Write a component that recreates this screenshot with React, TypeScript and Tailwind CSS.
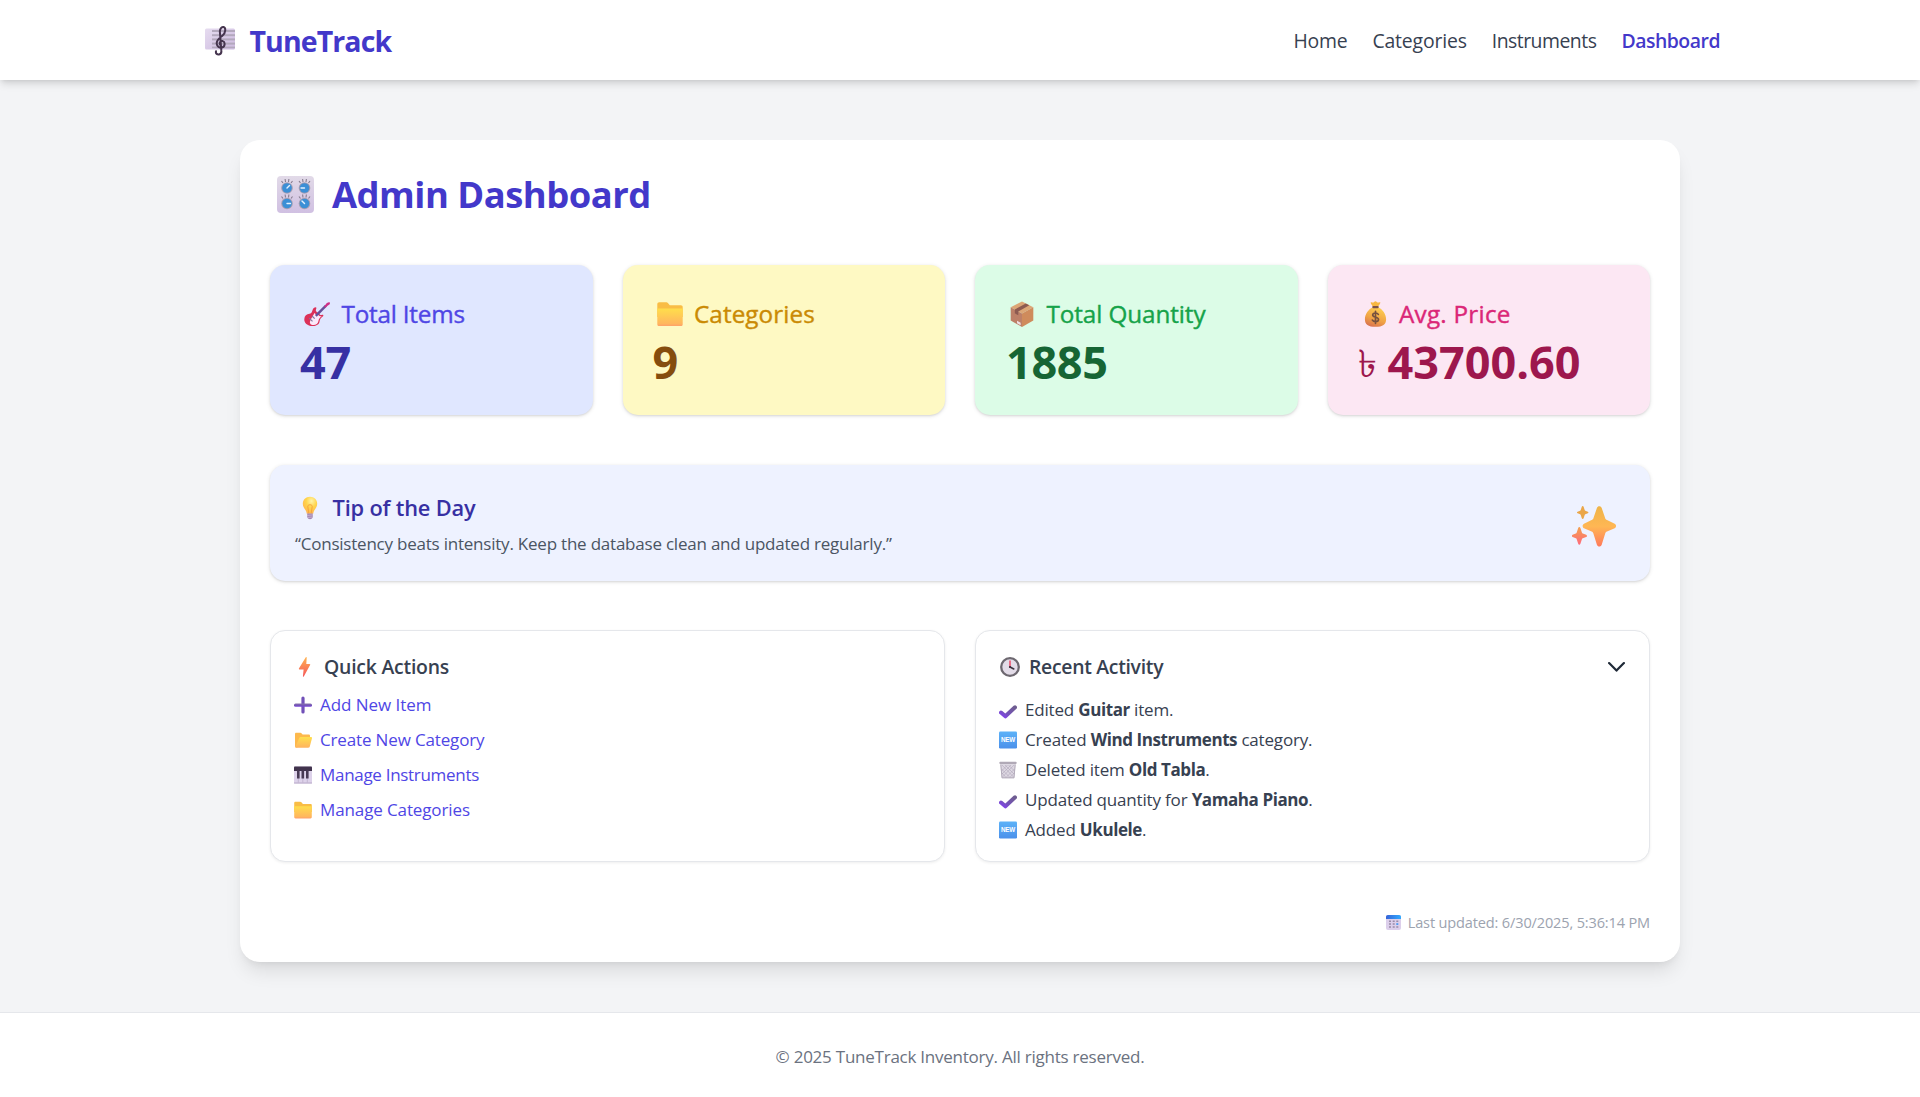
import type { ReactNode } from 'react';

type IconProps = { className?: string };

function ScoreIcon({ className }: IconProps) {
  return (
    <svg viewBox="0 0 30 30" className={className} aria-hidden="true">
      <defs>
        <linearGradient id="score" x1="0" y1="0" x2="1" y2="1">
          <stop offset="0" stopColor="#e6dcf0" />
          <stop offset="1" stopColor="#cdbadf" />
        </linearGradient>
      </defs>
      <rect x="0" y="2.5" width="30" height="21" rx="1.5" fill="url(#score)" />
      <g fill="#b3a8bd">
        <rect x="7" y="4" width="23" height="2" />
        <rect x="7" y="8.2" width="23" height="2" />
        <rect x="7" y="12.4" width="23" height="2" />
        <rect x="7" y="16.6" width="23" height="2" />
        <rect x="7" y="20.6" width="23" height="1.6" />
      </g>
      <path
        d="M11 25.2c-.6 2.6 1.400 3.500 3 3.200 2.200-.4 2.600-2.200 2.300-4.200L14.900 6.200c-.3-3.200 1.500-5.400 3.600-5.200 2.600.6 2.200 5.600-.7 8.200-3.200 2.900-6.300 4.600-6.100 8.300.2 3.200 2.900 4.400 5.300 3.900 3.200-.7 3.500-5.500.7-6.300-2.500-.5-3.600 1.900-2.600 3.500"
        fill="none"
        stroke="#45344e"
        strokeWidth="2"
        strokeLinecap="round"
      />
    </svg>
  );
}

function Knob({ x, y, dx, dy }: { x: number; y: number; dx: number; dy: number }) {
  return (
    <g>
      <path
        d={`M${x - 4} ${y - 5}l-1.500-2M${x - 1.500} ${y - 6}l-.4-3M${x + 1.500} ${y - 6}l.4-3M${x + 4} ${y - 5}l1.500-2`}
        stroke="#857c8e"
        strokeWidth="1.100"
      />
      <circle cx={x} cy={y} r="5.800" fill="#a79fb3" />
      <circle cx={x} cy={y} r="4.800" fill="#3b8fd6" />
      <path d={`M${x} ${y}l${dx} ${dy}`} stroke="#e4f2ff" strokeWidth="1.400" strokeLinecap="round" />
    </g>
  );
}

function KnobsIcon({ className }: IconProps) {
  return (
    <svg viewBox="0 0 37 37" className={className} aria-hidden="true">
      <defs>
        <linearGradient id="knobs" x1="0" y1="0" x2="0" y2="1">
          <stop offset="0" stopColor="#e2dae8" />
          <stop offset="1" stopColor="#d0c0e2" />
        </linearGradient>
      </defs>
      <rect width="37" height="37" rx="4" fill="url(#knobs)" />
      <Knob x={10} y={12} dx={2.5} dy={-2.5} />
      <Knob x={27.5} y={12} dx={-3.5} dy={0} />
      <Knob x={10} y={27.5} dx={3.5} dy={0} />
      <Knob x={27.5} y={27.5} dx={-2.5} dy={-2.5} />
    </svg>
  );
}

function GuitarIcon({ className }: IconProps) {
  return (
    <svg viewBox="0 0 26 26" className={className} aria-hidden="true">
      <path
        d="M9.500 7.200c2-1.700 3.700-.9 2.600.8-.9 1.700.2 3.100 2.300 3.900 1.300 1.100 1.900 2.600 3.600 1.900 1.900-.7 1.700 1.100.4 2-1.700 1.200-2.500 2.600-2.800 4.500-.5 3.500-3.300 4.800-7.100 4.700C3.400 24.800 0 22 .3 17.900.5 14.500 2.600 13 5.500 12.700c2.900-.3 2.400-3.500 4-5.500z"
        fill="#dc3159"
      />
      <path
        d="M10.500 12c1 1.600 3.300 1.200 4.600 2.700 1.100.9 2.100.5 2.600.6-2 1.400-3 2.800-3.300 5-.4 2.700-3 4.100-5.900 3.600-2.600-.5-3.300-2.400-2.100-4.500 1.200-2.500 2.600-4.500 4.100-7.400z"
        fill="#fbe9fa"
      />
      <path d="M11.800 14.800L22 4.600" stroke="#66509a" strokeWidth="2.500" />
      <path d="M20.200 5.400l2.600-3.500 2.700-.8.500 2-2.400 1.700-2.500 1.900z" fill="#cf2f86" />
      <path d="M5.300 17.200l3.200 3.200M8 15l2.700 2.700" stroke="#8377a0" strokeWidth="1.200" />
    </svg>
  );
}

function FolderIcon({ className }: IconProps) {
  return (
    <svg viewBox="0 0 26 26" className={className} aria-hidden="true">
      <defs>
        <linearGradient id="folder" x1="0" y1="0" x2="0" y2="1">
          <stop offset="0" stopColor="#ffde4b" />
          <stop offset=".85" stopColor="#ffb75e" />
          <stop offset="1" stopColor="#ffa069" />
        </linearGradient>
      </defs>
      <path d="M.3 3.200c0-1.300.7-2 2-2h6.500c1 0 1.700.3 2.300 1.100l1.700 2h11c1.300 0 1.900.7 1.900 1.900V16H.3z" fill="#f9bd45" />
      <path d="M.3 7.500h25.400v15.700c0 1.200-.7 1.900-1.900 1.900H2.200c-1.200 0-1.900-.7-1.900-1.900z" fill="url(#folder)" />
    </svg>
  );
}

function OpenFolderIcon({ className }: IconProps) {
  return (
    <svg viewBox="0 0 18 18" className={className} aria-hidden="true">
      <defs>
        <linearGradient id="open-folder" x1="0" y1="0" x2="0" y2="1">
          <stop offset="0" stopColor="#ffe04c" />
          <stop offset="1" stopColor="#ffb35f" />
        </linearGradient>
      </defs>
      <path d="M1 2.900C1 2.200 1.500 1.800 2.200 1.800h4.100c.6 0 1 .2 1.400.6l.9 1h6c.9 0 1.400.5 1.400 1.300V13L2.500 16.500C1.500 16.500 1 16 1 15z" fill="#fdb94c" />
      <path d="M6.600 6h10.500c.8 0 1.100.5.9 1.200l-2.200 8.300c-.2.800-.7 1.200-1.500 1.200H2.300c-.8 0-1.200-.5-.8-1.300L5.300 6.900c.3-.6.700-.9 1.300-.9z" fill="url(#open-folder)" />
    </svg>
  );
}

function PackageIcon({ className }: IconProps) {
  return (
    <svg viewBox="0 0 26 26" className={className} aria-hidden="true">
      <path d="M13 .5l11.300 5.700L13 12.500 1.700 6.200z" fill="#dca676" />
      <path d="M1.700 6.200L13 12.500V26L1.700 19.500z" fill="#bd8068" />
      <path d="M24.300 6.200L13 12.500V26l11.300-6.500z" fill="#cf8b5c" />
      <path d="M16.800 2.400l3.500 1.800L9.300 10.400v3.900l-3.500-2V8.500z" fill="#8d5a50" />
      <path d="M8 19.700l3.600 2v2.600L8 22.300z" fill="#f0dfe5" />
    </svg>
  );
}

function MoneyBagIcon({ className }: IconProps) {
  return (
    <svg viewBox="0 0 26 26" className={className} aria-hidden="true">
      <defs>
        <linearGradient id="bag" x1=".7" y1="0" x2=".3" y2="1">
          <stop offset="0" stopColor="#fdcf52" />
          <stop offset=".6" stopColor="#f0a244" />
          <stop offset="1" stopColor="#d8714f" />
        </linearGradient>
      </defs>
      <path d="M8.700 1.300c1.200-.4 1.800.4 2.700.1.900-.3 1-1.200 2.100-1.200 1 0 1.200.9 2.100 1.200.9.300 1.500-.5 2.700-.1.400 1.400-1.700 2.800-2.100 4.700h-5.400c-.4-1.900-2.500-3.300-2.100-4.700z" fill="#f7b742" />
      <path d="M10.500 6.500h6c4 1.800 7.600 6.600 7.600 11.700 0 5.300-3.300 7.600-10.600 7.600S2.900 23.500 2.900 18.200c0-5.100 3.600-9.900 7.600-11.700z" fill="url(#bag)" />
      <rect x="10.300" y="5" width="6.400" height="2.300" rx="1" fill="#7b5148" />
      <path d="M16.300 13.400c-.6-1-1.600-1.400-2.800-1.400-1.700 0-2.800.8-2.800 2.100 0 3 5.800 1.300 5.800 4.400 0 1.500-1.300 2.200-3 2.200-1.400 0-2.500-.5-3.100-1.600M13.500 10.300v12" fill="none" stroke="#76513f" strokeWidth="1.700" strokeLinecap="round" />
    </svg>
  );
}

function BulbIcon({ className }: IconProps) {
  return (
    <svg viewBox="0 0 24 24" className={className} aria-hidden="true">
      <defs>
        <radialGradient id="bulb" cx=".6" cy=".25" r=".8">
          <stop offset="0" stopColor="#fff3a8" />
          <stop offset=".45" stopColor="#ffd54c" />
          <stop offset="1" stopColor="#ffb04f" />
        </radialGradient>
      </defs>
      <path d="M12 .8c4.300 0 7.200 3 7.200 7 0 4.800-3.600 5.300-4 10H8.800c-.4-4.700-4-5.200-4-10 0-4 2.900-7 7.200-7z" fill="url(#bulb)" />
      <path d="M10.800 17.500l-1-7c-.4-2.300 4.800-2.300 4.400 0l-1 7" fill="none" stroke="#f5a33d" strokeWidth="1" />
      <path d="M9.200 17.500h5.600v3c0 3.700-5.600 3.700-5.600 0z" fill="#a587b3" />
      <path d="M9.200 19.500l5.600-.6M9.400 21.500l5.200-.5" stroke="#d1bfd9" strokeWidth=".7" />
    </svg>
  );
}

function SparklesIcon({ className }: IconProps) {
  return (
    <svg viewBox="0 0 44 41" className={className} aria-hidden="true">
      <defs>
        <linearGradient id="spark" x1=".5" y1="0" x2=".5" y2="1">
          <stop offset="0" stopColor="#eeb448" />
          <stop offset=".5" stopColor="#ffb754" />
          <stop offset="1" stopColor="#ff7a5c" />
        </linearGradient>
        <linearGradient id="spark-low" x1=".5" y1="0" x2=".5" y2="1">
          <stop offset="0" stopColor="#f3a04d" />
          <stop offset="1" stopColor="#ff6b7c" />
        </linearGradient>
      </defs>
      <path d="M24.900 2c.8-2.400 4-2.400 4.800 0l3.500 10.200c.4 1 .8 1.400 1.800 1.800l7.700 3.700c1.800.9 1.800 3.700 0 4.600L35 25.600c-1 .4-1.400.9-1.800 1.900L29.700 38.800c-.8 2.400-4 2.400-4.800 0l-3.500-11.300c-.4-1-.8-1.500-1.800-1.900L12 22.300c-1.800-.9-1.800-3.700 0-4.600l7.600-3.700c1-.4 1.400-.8 1.800-1.800z" fill="url(#spark)" />
      <path d="M9.800.8c.3-1 1.500-1 1.800 0l1.100 3.300c.2.400.3.500.6.700l2.500.9c.8.300.8 1.300 0 1.600l-2.500.9c-.3.200-.4.300-.6.700l-1.100 3.300c-.3 1-1.500 1-1.800 0L8.700 8.900c-.2-.4-.3-.5-.6-.7l-2.500-.9c-.8-.3-.8-1.300 0-1.600l2.500-.9c.3-.2.400-.3.600-.7z" fill="#eaa648" />
      <path d="M6.200 22c.4-1.200 1.800-1.200 2.200 0l1.500 4.600c.2.600.4.800.9 1l3.400 1.200c1 .4 1 1.800 0 2.200l-3.400 1.200c-.5.200-.7.400-.9 1l-1.500 4.600c-.4 1.200-1.800 1.200-2.200 0l-1.500-4.600c-.2-.6-.4-.8-.9-1L.6 31c-1-.4-1-1.800 0-2.200L3.800 27.600c.5-.2.700-.4.900-1z" fill="url(#spark-low)" />
    </svg>
  );
}

function BoltIcon({ className }: IconProps) {
  return (
    <svg viewBox="0 0 20 20" className={className} aria-hidden="true">
      <defs>
        <linearGradient id="bolt" x1=".5" y1="0" x2=".5" y2="1">
          <stop offset="0" stopColor="#ffb34f" />
          <stop offset="1" stopColor="#f5565b" />
        </linearGradient>
      </defs>
      <path d="M10.800.3c.3-.5.900-.3.900.300L11.300 7h3.200c.7 0 .9.500.6 1L8.800 19.500c-.4.600-1 .4-.9-.3l.7-6.800H4.500c-.6 0-.8-.4-.6-.9z" fill="url(#bolt)" />
    </svg>
  );
}

function PlusIcon({ className }: IconProps) {
  return (
    <svg viewBox="0 0 18 18" className={className} aria-hidden="true">
      <defs>
        <linearGradient id="plus" x1="0" y1="0" x2="0" y2="1">
          <stop offset="0" stopColor="#8a76ad" />
          <stop offset=".55" stopColor="#7354b5" />
          <stop offset="1" stopColor="#7a45dd" />
        </linearGradient>
      </defs>
      <path d="M9 2v14" stroke="#7150b8" strokeWidth="3.200" strokeLinecap="round" />
      <rect y="7.400" width="18" height="3.400" rx="1.500" fill="url(#plus)" />
    </svg>
  );
}

function PianoIcon({ className }: IconProps) {
  return (
    <svg viewBox="0 0 18 18" className={className} aria-hidden="true">
      <rect y=".5" width="18" height="17" rx=".8" fill="#ddd2ea" />
      <path d="M0 16.500h18v1H0z" fill="#b9abc8" />
      <path d="M4.300 12v4.500M8.800 12v4.500M13.300 12v4.500" stroke="#b8aac6" strokeWidth=".7" />
      <path d="M0 1.300C0 .8.300.5.800.5h16.400c.5 0 .8.300.8.800V5H0z" fill="#41334d" />
      <path d="M3 4.500h2.600v8H3zM7.500 4.500h2.600v8H7.500zM12 4.500h2.600v8H12z" fill="#483a54" />
    </svg>
  );
}

function ClockIcon({ className }: IconProps) {
  return (
    <svg viewBox="0 0 20 20" className={className} aria-hidden="true">
      <circle cx="10" cy="10" r="8.800" fill="#e3dce8" stroke="#6d6870" strokeWidth="2.300" />
      <path d="M10 10V4" stroke="#ee4a67" strokeWidth="1.500" strokeLinecap="round" />
      <path d="M10 10l3.800 2" stroke="#3c3340" strokeWidth="1.600" strokeLinecap="round" />
      <circle cx="10" cy="10" r="1.100" fill="#3c3340" />
    </svg>
  );
}

function CheckIcon({ className }: IconProps) {
  return (
    <svg viewBox="0 0 18 18" className={className} aria-hidden="true">
      <defs>
        <linearGradient id="check" x1="1" y1="0" x2="0" y2="1">
          <stop offset="0" stopColor="#6f5d90" />
          <stop offset=".6" stopColor="#7452b8" />
          <stop offset="1" stopColor="#8145ea" />
        </linearGradient>
      </defs>
      <path d="M2 11.500l4.400 3.800L16 6.300" fill="none" stroke="url(#check)" strokeWidth="4" strokeLinecap="round" strokeLinejoin="round" />
    </svg>
  );
}

function NewIcon({ className }: IconProps) {
  return (
    <svg viewBox="0 0 18 18" className={className} aria-hidden="true">
      <defs>
        <linearGradient id="new" x1="0" y1="0" x2="0" y2="1">
          <stop offset="0" stopColor="#5cb2f8" />
          <stop offset="1" stopColor="#4b90ea" />
        </linearGradient>
      </defs>
      <rect y=".5" width="18" height="17" rx="1.300" fill="url(#new)" />
      <text x="9" y="11.300" textAnchor="middle" fontFamily="Liberation Sans" fontWeight="700" fontSize="6.300" fill="#fff">
        NEW
      </text>
    </svg>
  );
}

function BinIcon({ className }: IconProps) {
  return (
    <svg viewBox="0 0 18 18" className={className} aria-hidden="true">
      <path d="M1.300 2.500h15.400L15.300 17.300H2.700z" fill="#ddd8e2" />
      <path
        d="M3 4l11.500 12M6 4l9 9M9.500 4l6 6M2.500 8l8.500 8.500M3 12l4 4.500M15 4L3.500 16M12 4l-9 9M8.500 4l-6 6M15.500 8L7 16.500M15.300 12l-4.500 4.500"
        stroke="#b0a6ba"
        strokeWidth=".6"
      />
      <path d="M1.800 3.500l1.200 13.300h12L16.200 3.500" fill="none" stroke="#b3abba" strokeWidth="1" />
      <rect x=".3" y=".8" width="17.400" height="2.200" rx="1" fill="#b0a9b6" />
    </svg>
  );
}

function CalendarIcon({ className }: IconProps) {
  return (
    <svg viewBox="0 0 15 15" className={className} aria-hidden="true">
      <defs>
        <linearGradient id="cal-top" x1="0" y1="0" x2="1" y2="0">
          <stop offset="0" stopColor="#3663d8" />
          <stop offset="1" stopColor="#31aaff" />
        </linearGradient>
      </defs>
      <rect width="15" height="15" rx="2" fill="#dccfeb" />
      <path d="M0 4V2C0 .7.700 0 2 0h11c1.300 0 2 .7 2 2v2z" fill="url(#cal-top)" />
      <path d="M3 5.500h2v1.500H3zM6.700 5.500h2v1.500h-2zM10.300 5.500h2v1.500h-2zM3 8.300h2v1.500H3zM6.700 8.300h2v1.500h-2zM3 11.300h2v1.500H3zM6.700 11.300h2v1.500h-2zM10.300 11.300h2v1.500h-2z" fill="#9a8ca8" />
      <path d="M10.300 8.300h2v1.500h-2z" fill="#2b8ef0" />
    </svg>
  );
}

function StatCard({
  tone,
  labelTone,
  valueTone,
  icon,
  label,
  children,
}: {
  tone: string;
  labelTone: string;
  valueTone: string;
  icon: ReactNode;
  label: string;
  children: ReactNode;
}) {
  return (
    <div className={`h-[150px] rounded-[15px] p-[30px] shadow-[0_1px_4px_rgba(0,0,0,0.12),0_1px_2px_rgba(0,0,0,0.08)] ${tone}`}>
      <h2 className={`flex items-center text-[24.25px] leading-[37px] font-medium [-webkit-text-stroke:0.4px] ${labelTone}`}>
        <span className="mr-[11.500px] ml-[4px] shrink-0">{icon}</span>
        {label}
      </h2>
      <p className={`mt-1 flex text-[45px] leading-[52px] font-bold whitespace-nowrap ${valueTone}`}>{children}</p>
    </div>
  );
}

const NAV = [
  { label: 'Home', style: 'tracking-[-0.2px] text-[#374151]' },
  { label: 'Categories', style: 'tracking-[-0.16px] text-[#374151]' },
  { label: 'Instruments', style: 'tracking-[-0.5px] text-[#374151]' },
  { label: 'Dashboard', style: 'font-semibold tracking-[-0.47px] text-[#4338ca]' },
];

const ACTIONS = [
  { label: 'Add New Item', style: 'tracking-[-0.05px]', Icon: PlusIcon },
  { label: 'Create New Category', style: 'tracking-[-0.15px]', Icon: OpenFolderIcon },
  { label: 'Manage Instruments', style: 'tracking-[-0.3px]', Icon: PianoIcon },
  { label: 'Manage Categories', style: 'tracking-[-0.12px]', Icon: FolderIcon },
];

const ACTIVITY = [
  { before: 'Edited ', name: 'Guitar', after: ' item.', Icon: CheckIcon },
  { before: 'Created ', name: 'Wind Instruments', after: ' category.', Icon: NewIcon },
  { before: 'Deleted item ', name: 'Old Tabla', after: '.', Icon: BinIcon },
  { before: 'Updated quantity for ', name: 'Yamaha Piano', after: '.', Icon: CheckIcon },
  { before: 'Added ', name: 'Ukulele', after: '.', Icon: NewIcon },
];

const PANEL = 'h-[232px] rounded-[15px] border border-[#e5e7eb] bg-white pt-5 pr-6 pl-[23px] shadow-[0_1px_3px_rgba(0,0,0,0.07)]';

export default function App() {
  return (
    <div className="flex h-[1097px] flex-col overflow-hidden bg-[#f3f4f6] font-['Open_Sans',sans-serif] text-[#1f2937]">
      <header className="z-10 h-20 shrink-0 bg-white shadow-[0_5px_8px_-1px_rgba(0,0,0,0.12),0_2px_5px_-2px_rgba(0,0,0,0.12)]">
        <div className="mx-auto flex h-full w-[1520px] items-center justify-between pl-[5px]">
          <div className="flex items-center gap-[14.500px] pt-0.5">
            <ScoreIcon className="size-[30px]" />
            <span className="text-[28.5px] leading-9 font-bold tracking-[-0.9px] text-[#4338ca]">TuneTrack</span>
          </div>
          <nav className="flex gap-[25px] pt-0.5 text-[19.4px] leading-7">
            {NAV.map(({ label, style }) => (
              <a key={label} className={style}>
                {label}
              </a>
            ))}
          </nav>
        </div>
      </header>

      <main className="mx-auto mt-[60px] h-[822px] w-[1440px] shrink-0 rounded-[20px] bg-white p-[30px] shadow-[0_13px_19px_-4px_rgba(0,0,0,0.1),0_5px_8px_-5px_rgba(0,0,0,0.1)]">
        <h1 className="flex items-center text-[36.4px] leading-[48px] font-bold tracking-[-0.51px] text-[#4338ca]">
          <KnobsIcon className="mr-[18px] ml-[7px] size-[37px]" />
          Admin Dashboard
        </h1>

        <section className="mt-[47px] grid grid-cols-4 gap-[30px]">
          <StatCard tone="bg-[#e0e7ff]" labelTone="tracking-[-0.2px] text-[#4f46e5]" valueTone="tracking-[-0.3px] text-[#3730a3]" icon={<GuitarIcon className="size-[26px]" />} label="Total Items">
            47
          </StatCard>
          <StatCard tone="bg-[#fef9c3]" labelTone="tracking-[0.08px] text-[#ca8a04]" valueTone="text-[#854d0e]" icon={<FolderIcon className="size-[26px]" />} label="Categories">
            9
          </StatCard>
          <StatCard tone="bg-[#dcfce7]" labelTone="tracking-[-0.08px] text-[#16a34a]" valueTone="pl-px tracking-[-0.3px] text-[#166534]" icon={<PackageIcon className="size-[26px]" />} label="Total Quantity">
            1885
          </StatCard>
          <StatCard tone="bg-[#fce7f3]" labelTone="tracking-[0.25px] text-[#db2777]" valueTone="text-[#9d174d]" icon={<MoneyBagIcon className="size-[26px]" />} label="Avg. Price">
            <span className="w-[30px] text-[38px] font-normal">৳</span>
            43700.60
          </StatCard>
        </section>

        <section className="mt-[50px] flex h-[116px] items-center justify-between rounded-[15px] bg-[#eef2ff] pr-[34px] pl-[25px] shadow-[0_1px_4px_rgba(0,0,0,0.12),0_1px_2px_rgba(0,0,0,0.08)]">
          <div className="pb-px">
            <h2 className="flex items-center text-[21.8px] leading-[36px] font-semibold tracking-[-0.18px] text-[#3730a3]">
              <BulbIcon className="mr-[10.5px] ml-[3px] size-6" />
              Tip of the Day
            </h2>
            <p className="mt-[5px] text-[17px] leading-[25px] tracking-[-0.22px] text-[#4b5563]">
              “Consistency beats intensity. Keep the database clean and updated regularly.”
            </p>
          </div>
          <SparklesIcon className="mt-[7px] h-[41px] w-[44px]" />
        </section>

        <section className="mt-[49px] grid grid-cols-2 gap-[30px]">
          <div className={PANEL}>
            <h3 className="flex items-center text-[19.4px] leading-8 font-semibold tracking-[-0.22px] text-[#374151]">
              <BoltIcon className="mr-[9px] ml-px size-5" />
              Quick Actions
            </h3>
            <ul className="mt-[9px] flex flex-col gap-2.5 text-[17px] leading-[25px] text-[#4f46e5]">
              {ACTIONS.map(({ label, style, Icon }) => (
                <li key={label} className={`flex items-center gap-2 ${style}`}>
                  <Icon className="size-[18px]" />
                  {label}
                </li>
              ))}
            </ul>
          </div>

          <div className={PANEL}>
            <div className="flex items-center justify-between">
              <h3 className="flex items-center text-[19.4px] leading-8 font-semibold tracking-[-0.3px] text-[#374151]">
                <ClockIcon className="mr-[9px] ml-px size-5" />
                Recent Activity
              </h3>
              <svg viewBox="0 0 17 10" className="h-2.5 w-[17px]" fill="none" stroke="#1f2937" strokeWidth="2.200" strokeLinecap="round" strokeLinejoin="round">
                <path d="M1.100 1.100l7.400 7.500 7.400-7.500" />
              </svg>
            </div>
            <ul className="mt-3.5 flex flex-col gap-[5px] text-[17px] leading-[25px] tracking-[-0.18px] text-[#374151]">
              {ACTIVITY.map(({ before, name, after, Icon }) => (
                <li key={name} className="flex items-center gap-2">
                  <Icon className="size-[18px]" />
                  <span>
                    {before}
                    <strong className="font-bold tracking-[-0.42px]">{name}</strong>
                    {after}
                  </span>
                </li>
              ))}
            </ul>
          </div>
        </section>

        <p className="mt-[50px] flex items-center justify-end gap-[7px] text-[14.55px] leading-[21px] tracking-[-0.15px] text-[#9ca3af]">
          <CalendarIcon className="size-[15px]" />
          Last updated: 6/30/2025, 5:36:14 PM
        </p>
      </main>

      <footer className="mt-[50px] flex-1 border-t border-[#e5e7eb] bg-white pt-[31px] text-center text-[17px] leading-[25px] tracking-[-0.24px] text-[#6b7280]">
        © 2025 TuneTrack Inventory. All rights reserved.
      </footer>
    </div>
  );
}
